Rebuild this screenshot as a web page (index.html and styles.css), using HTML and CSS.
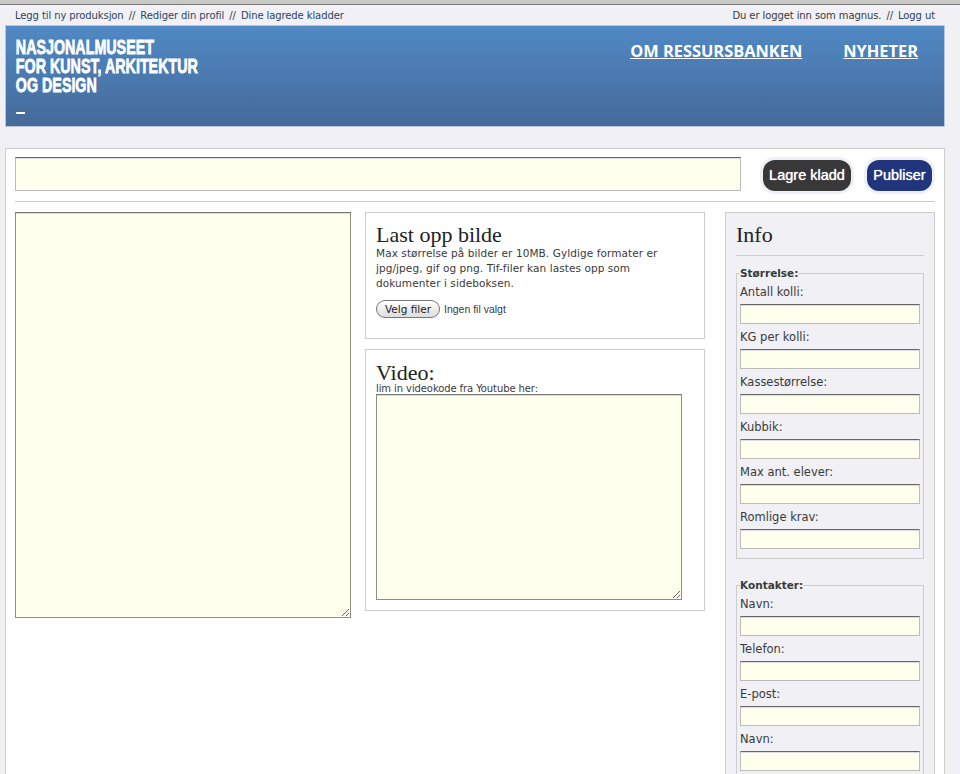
FILE: index.html
```html
<!DOCTYPE html>
<html lang="en">
<head>
    <meta charset="UTF-8">
    <meta name="viewport" content="width=device-width, initial-scale=1.0">
    <title>Ressursbanken</title>
    <link rel="stylesheet" href="styles.css">
</head>
<body>
    <div class="browser-edge"></div>
    <div class="wrapper">
        <div class="user-bar">
            <div><a href="#">Legg til ny produksjon</a> <span class="sep">//</span> <a href="#">Rediger din profil</a> <span class="sep">//</span> <a href="#">Dine lagrede kladder</a></div>
            <div>Du er logget inn som magnus. <span class="sep">//</span> <a href="#">Logg ut</a></div>
        </div>

        <div class="header">
            <div class="logo">
                <div>NASJONALMUSEET</div>
                <div>FOR KUNST, ARKITEKTUR</div>
                <div>OG DESIGN</div>
                <div class="logo-dash"></div>
            </div>
            <div class="nav">
                <a href="#">OM RESSURSBANKEN</a>
                <a href="#">NYHETER</a>
            </div>
        </div>

        <div class="content">
            <div class="title-row">
                <input type="text" class="title-input">
                <button class="btn btn-dark">Lagre kladd</button>
                <button class="btn btn-blue">Publiser</button>
            </div>

            <div class="columns">
                <textarea class="main-text"></textarea>

                <div class="middle">
                    <div class="box upload-box">
                        <h2>Last opp bilde</h2>
                        <p>Max størrelse på bilder er 10MB. Gyldige formater er jpg/jpeg, gif og png. Tif-filer kan lastes opp som dokumenter i sideboksen.</p>
                        <div class="file-row">
                            <button class="file-btn">Velg filer</button>
                            <span>Ingen fil valgt</span>
                        </div>
                    </div>
                    <div class="box video-box">
                        <h2>Video:</h2>
                        <label>lim in videokode fra Youtube her:</label>
                        <textarea class="video-text"></textarea>
                    </div>
                </div>

                <div class="sidebar">
                    <h2>Info</h2>
                    <fieldset>
                        <legend>Størrelse:</legend>
                        <label>Antall kolli:</label>
                        <input type="text">
                        <label>KG per kolli:</label>
                        <input type="text">
                        <label>Kassestørrelse:</label>
                        <input type="text">
                        <label>Kubbik:</label>
                        <input type="text">
                        <label>Max ant. elever:</label>
                        <input type="text">
                        <label>Romlige krav:</label>
                        <input type="text">
                    </fieldset>
                    <fieldset>
                        <legend>Kontakter:</legend>
                        <label>Navn:</label>
                        <input type="text">
                        <label>Telefon:</label>
                        <input type="text">
                        <label>E-post:</label>
                        <input type="text">
                        <label>Navn:</label>
                        <input type="text">
                    </fieldset>
                </div>
            </div>
        </div>
    </div>
</body>
</html>
```

FILE: styles.css
```css
html, body {
    height: 100%;
    overflow: hidden;
}
body {
    margin: 0;
    background-color: #f0f0f5;
    color: #3a3a3a;
    font-family: "DejaVu Sans", sans-serif;
    font-size: 10px;
}
a {
    color: #2c4565;
    text-decoration: none;
}
.browser-edge {
    height: 4px;
    background-color: #c8c8c6;
    border-bottom: 1px solid #777;
}
.wrapper {
    width: 940px;
    margin-left: 5px;
}

/* top bar */
.user-bar {
    display: flex;
    justify-content: space-between;
    height: 20px;
    padding: 4px 10px 0 10px;
    box-sizing: border-box;
    line-height: 13px;
    letter-spacing: -0.1px;
}
.sep {
    margin: 0 2px;
}

/* header */
.header {
    display: flex;
    justify-content: space-between;
    height: 102px;
    box-sizing: border-box;
    border: 1px solid #b9c6d8;
    background: linear-gradient(#5089c4, #456a99);
}
.logo {
    padding: 11px 0 0 14.5px;
    color: #fff;
    font-family: "Liberation Sans", sans-serif;
    font-weight: bold;
    font-size: 21px;
    line-height: 19px;
    white-space: nowrap;
    transform: scaleX(0.68);
    transform-origin: left top;
    -webkit-text-stroke: 0.8px #fff;
}
.logo-dash {
    width: 13px;
    height: 2px;
    margin-top: 18px;
    background-color: #fff;
}
.nav {
    display: flex;
    gap: 41px;
    padding: 15px 26px 0 0;
}
.nav a {
    color: #fff;
    font-family: "Open Sans", sans-serif;
    font-weight: bold;
    font-size: 16.4px;
    line-height: 20px;
    height: 22px;
    text-decoration: underline;
}

/* main card */
.content {
    margin-top: 21px;
    padding: 8px 9px 0 9px;
    min-height: 800px;
    background-color: #fff;
    border: 1px solid #ccc;
}
.title-row {
    display: flex;
    align-items: center;
    padding-bottom: 10px;
    border-bottom: 1px solid #ccc;
}
input, textarea {
    display: block;
    box-sizing: border-box;
    background-color: #ffffee;
    border: 1px solid #bbb;
    border-top-color: #666;
    box-shadow: inset 0 1px 0 #ddd;
    margin: 0;
    padding: 2px;
}
.title-input {
    width: 726px;
    height: 34px;
    margin-right: 22px;
}
.btn {
    height: 31px;
    margin-top: 3px;
    padding: 0 0 2px 0;
    color: #fff;
    border: none;
    border-radius: 12px;
    box-shadow: 0 0 0 3px #eef0f6;
    font-family: "Liberation Sans", sans-serif;
    font-size: 14.5px;
    text-shadow: 0 0 1px #fff;
}
.btn-dark {
    width: 88px;
    margin-right: 16px;
    background-color: #383838;
}
.btn-blue {
    width: 65px;
    background-color: #20357c;
}
.columns {
    display: grid;
    grid-template-columns: 336px 340px 210px;
    column-gap: 14px;
    margin-top: 10px;
    align-items: start;
}
.main-text {
    width: 336px;
    height: 406px;
    border-color: #8f8f80;
    border-top-color: #777;
}
.middle {
    display: flex;
    flex-direction: column;
    gap: 10px;
}
.box {
    box-sizing: border-box;
    padding: 10px;
    border: 1px solid #ccc;
}
.upload-box {
    height: 127px;
}
.video-box {
    height: 262px;
    padding-top: 11px;
}
h2 {
    margin: 0;
    color: #222;
    font-family: "Liberation Serif", serif;
    font-weight: normal;
    font-size: 22px;
    line-height: 24px;
}
.box p {
    margin: -1px 0 0 0;
    font-size: 10.5px;
    line-height: 15px;
    letter-spacing: 0.08px;
}
.file-row {
    display: flex;
    align-items: center;
    gap: 4px;
    margin-top: 9px;
    font-family: "Liberation Sans", sans-serif;
    font-size: 10.5px;
}
.file-btn {
    width: 64px;
    height: 18px;
    padding: 0;
    color: #222;
    background: linear-gradient(#fff, #ddd);
    border: 1px solid #777;
    border-radius: 9px;
    font-family: "DejaVu Sans", sans-serif;
    font-size: 10.5px;
}
.video-box label {
    display: block;
    margin-top: -2px;
    font-size: 10px;
    line-height: 11px;
    letter-spacing: -0.1px;
}
.video-text {
    width: 306px;
    height: 206px;
    border-color: #8f8f80;
    border-top-color: #777;
}

/* sidebar */
.sidebar {
    margin-left: 6px;
    width: 210px;
    box-sizing: border-box;
    padding: 10px;
    background-color: #f0f0f5;
    border: 1px solid #ccc;
}
.sidebar h2 {
    padding-bottom: 8px;
    border-bottom: 1px solid #ccc;
    margin-bottom: 11px;
}
fieldset {
    margin: 0 0 20px 0;
    padding: 0 3px 8px 3px;
    border: 1px solid #ccc;
}
legend {
    padding: 0;
    font-weight: bold;
    font-size: 10.5px;
    line-height: 13px;
}
fieldset label {
    display: block;
    height: 24px;
    padding-top: 6px;
    box-sizing: border-box;
    font-size: 11.5px;
    line-height: 13px;
}
fieldset input {
    width: 180px;
    height: 20px;
    margin-bottom: 1px;
}
```
